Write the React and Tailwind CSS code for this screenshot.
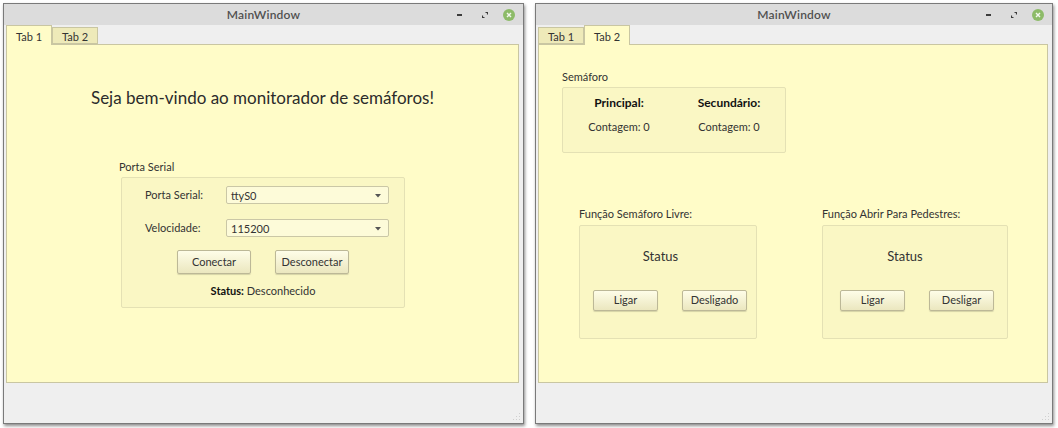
import React from "react";

function TitleBar() {
  return (
    <div className="h-[21px] shrink-0 grid grid-cols-[1fr_auto_1fr] items-center bg-[#dcdcdc]">
      <div />
      <span className="text-[12px] font-semibold text-[#505050] tracking-[0.2px]">MainWindow</span>
      <div className="flex items-center justify-end pr-[8px]">
        <span className="w-[5px] h-[2px] bg-[#3c3c3c]" />
        <svg className="ml-[20px]" width="6" height="6" viewBox="0 0 6 6">
          <path d="M3.5 0.5h2v2M0.5 3.5v2h2" stroke="#3c3c3c" strokeWidth="1.2" fill="none" />
        </svg>
        <span className="ml-[15px] w-[12px] h-[12px] rounded-full bg-[#8dbb68] flex items-center justify-center">
          <svg width="6" height="6" viewBox="0 0 6 6">
            <path d="M1 1l4 4M5 1l-4 4" stroke="#f4f8ef" strokeWidth="1.4" />
          </svg>
        </span>
      </div>
    </div>
  );
}

function Tab({ label, active }) {
  if (active) {
    return (
      <div className="relative z-10 -mb-px h-[20px] px-[9px] pt-[3px] bg-[#fffcc8] border border-b-0 border-[#c9c6a2] text-[11px] text-[#333]">
        {label}
      </div>
    );
  }
  return (
    <div className="h-[17px] px-[9px] pt-[1px] bg-[#eeeab9] border border-[#c9c6a2] text-[11px] text-[#333]">
      {label}
    </div>
  );
}

function Window({ active, children, className }) {
  return (
    <div className={`flex flex-col bg-[#efefef] border border-[#7a7a7a] shadow-[1px_2px_3px_rgba(0,0,0,0.45)] ${className}`}>
      <TitleBar />
      <div className="flex-1 flex flex-col px-[2px]">
        <div className="flex items-end h-[19px]">
          <Tab label="Tab 1" active={active === 1} />
          <Tab label="Tab 2" active={active === 2} />
        </div>
        <div className="flex-1 bg-[#fffcc8] border border-[#c9c6a2] mr-[2px]">{children}</div>
        <div className="h-[40px] shrink-0 flex justify-end items-end pb-[2px]">
          <svg width="8" height="8" viewBox="0 0 8 8">
            <g fill="#cfcfcf">
              <rect x="6" y="0" width="1" height="1" />
              <rect x="3" y="3" width="1" height="1" />
              <rect x="6" y="3" width="1" height="1" />
              <rect x="0" y="6" width="1" height="1" />
              <rect x="3" y="6" width="1" height="1" />
              <rect x="6" y="6" width="1" height="1" />
            </g>
          </svg>
        </div>
      </div>
    </div>
  );
}

function Button({ children, className }) {
  return (
    <button className={`flex items-center justify-center rounded-[2px] border border-[#bcb897] bg-gradient-to-b from-[#fefde8] to-[#ebe7bf] shadow-[0_1px_1px_rgba(0,0,0,0.15)] text-[11px] text-[#333] ${className}`}>
      {children}
    </button>
  );
}

function Combo({ value }) {
  return (
    <div className="w-[163px] h-[18px] shrink-0 flex items-start justify-between pl-[4px] pr-[7px] pt-[1px] rounded-[2px] border border-[#cac7a6] bg-[#fdfbd9] text-[11px] text-[#333]">
      <span>{value}</span>
      <svg className="mt-[6px]" width="6" height="4" viewBox="0 0 6 4">
        <path d="M0 0h6L3 3.5z" fill="#555" />
      </svg>
    </div>
  );
}

function GroupBox({ className, children }) {
  return (
    <div className={`border border-[#e4e1b4] bg-[#faf7c4] rounded-[2px] ${className}`}>{children}</div>
  );
}

function TabOne() {
  return (
    <div className="flex flex-col">
      <h1 className="pt-[41px] text-center text-[17px] leading-[24px] text-[#2b2b2b]">
        Seja bem-vindo ao monitorador de semáforos!
      </h1>
      <div className="mt-[50px] ml-[112px] flex flex-col">
        <span className="text-[11px] leading-[14px] text-[#333]">Porta Serial</span>
        <GroupBox className="mt-[3px] ml-[2px] w-[284px] h-[131px] flex flex-col">
          <div className="mt-[8px] flex items-center">
            <span className="w-[104px] shrink-0 pl-[23px] text-[11px] text-[#333]">Porta Serial:</span>
            <Combo value="ttyS0" />
          </div>
          <div className="mt-[15px] flex items-center">
            <span className="w-[104px] shrink-0 pl-[23px] text-[11px] text-[#333]">Velocidade:</span>
            <Combo value="115200" />
          </div>
          <div className="mt-[13px] flex justify-center gap-[24px]">
            <Button className="w-[74px] h-[24px]">Conectar</Button>
            <Button className="w-[74px] h-[24px]">Desconectar</Button>
          </div>
          <div className="mt-[9px] text-center text-[11px] text-[#333]">
            <span className="font-bold text-[#111]">Status:</span> Desconhecido
          </div>
        </GroupBox>
      </div>
    </div>
  );
}

function FuncGroup({ title, off, width, statusShift }) {
  return (
    <div className="flex flex-col">
      <span className="text-[11px] leading-[14px] text-[#333]">{title}</span>
      <GroupBox className={`mt-[4px] h-[114px] flex flex-col ${width}`}>
        <div className={`mt-[21px] text-center text-[13px] leading-[19px] text-[#333] ${statusShift}`}>Status</div>
        <div className="mt-[24px] pl-[4px] flex justify-center gap-[24px]">
          <Button className="w-[65px] h-[21px]">Ligar</Button>
          <Button className="w-[65px] h-[21px]">{off}</Button>
        </div>
      </GroupBox>
    </div>
  );
}

function TabTwo() {
  return (
    <div className="flex flex-col pt-[25px]">
      <div className="ml-[23px] flex flex-col">
        <span className="text-[11px] leading-[14px] text-[#333]">Semáforo</span>
        <GroupBox className="mt-[3px] w-[224px] h-[66px] pl-[11px] pt-[6px] grid grid-cols-[90px_90px] gap-x-[20px] content-start">
          <span className="text-center text-[12px] font-bold text-[#111]">Principal:</span>
          <span className="text-center text-[12px] font-bold text-[#111]">Secundário:</span>
          <span className="mt-[7px] text-center text-[11px] text-[#333]">Contagem: 0</span>
          <span className="mt-[7px] text-center text-[11px] text-[#333]">Contagem: 0</span>
        </GroupBox>
      </div>
      <div className="mt-[54px] ml-[40px] flex gap-[65px]">
        <FuncGroup title="Função Semáforo Livre:" off="Desligado" width="w-[178px]" statusShift="-ml-[15px]" />
        <FuncGroup title="Função Abrir Para Pedestres:" off="Desligar" width="w-[186px]" statusShift="-ml-[20px]" />
      </div>
    </div>
  );
}

export default function App() {
  return (
    <div className="w-[1058px] h-[428px] bg-white flex items-start pt-[3px] pl-[3px] font-[family-name:Lato,sans-serif]">
      <Window active={1} className="w-[521px] h-[421px]">
        <TabOne />
      </Window>
      <Window active={2} className="ml-[11px] w-[518px] h-[421px]">
        <TabTwo />
      </Window>
    </div>
  );
}
